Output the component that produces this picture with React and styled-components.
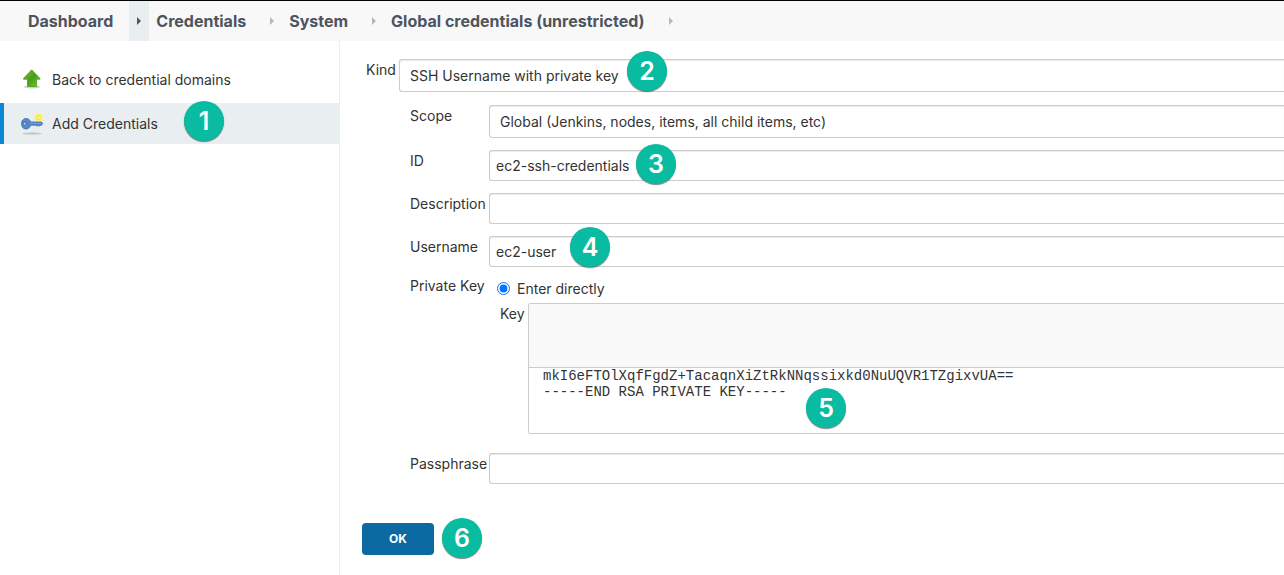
import React from "react";
import styled, { createGlobalStyle } from "styled-components";

const GlobalStyle = createGlobalStyle`
  *, *::before, *::after { box-sizing: border-box; }
  body {
    margin: 0;
    background: #fff;
    color: #333;
    font-family: Inter, "Liberation Sans", sans-serif;
    font-size: 14px;
    line-height: 22px;
  }
  #root { min-height: 100vh; display: flex; flex-direction: column; }
`;

const Breadcrumbs = styled.nav`
  display: flex;
  align-items: stretch;
  height: 41px;
  padding-left: 28px;
  border-top: 1px solid #000;
  background: #f8f8f8;
`;

const Crumb = styled.a`
  display: flex;
  align-items: center;
  color: #4d545d;
  font-size: 16px;
  font-weight: 700;
  text-decoration: none;
  white-space: nowrap;
`;

const CrumbArrow = styled.span`
  display: flex;
  align-items: center;
  justify-content: center;
  width: 20px;
  margin: 0 7px 0 16px;
  color: ${(p) => (p.$active ? "#4d545d" : "#b5b8bb")};
  background: ${(p) => (p.$active ? "#e9eef1" : "transparent")};
`;

const Page = styled.div`
  display: flex;
  flex: 1;
`;

const Sidebar = styled.aside`
  display: flex;
  flex-direction: column;
  flex: 0 0 340px;
  gap: 3px;
  padding-top: 18px;
  border-right: 1px solid #eee;
`;

const Task = styled.a`
  position: relative;
  display: flex;
  align-items: center;
  gap: 8px;
  height: 41px;
  padding-left: 16px;
  border-left: 4px solid ${(p) => (p.$active ? "#0b86d3" : "transparent")};
  background: ${(p) => (p.$active ? "#e9eef1" : "transparent")};
  color: #333;
  text-decoration: none;
`;

const Main = styled.main`
  flex: 1;
  min-width: 0;
  padding: 18px 0 16px 22px;
`;

const Form = styled.form`
  display: flex;
  flex-direction: column;
`;

const Row = styled.div`
  display: flex;
  align-items: flex-start;
`;

const KindRow = styled(Row)`
  padding-left: 4px;
`;

const Fields = styled.div`
  display: flex;
  flex-direction: column;
  gap: 12px;
  padding: 13px 0 0 48px;
`;

const Label = styled.label`
  flex: 0 0 ${(p) => p.$width}px;
  white-space: nowrap;
`;

const GroupLabel = styled.span`
  flex: 0 0 79px;
  white-space: nowrap;
`;

const Control = styled.div`
  position: relative;
  flex: 1;
  min-width: 0;
`;

const Select = styled.select`
  display: block;
  width: 100%;
  height: 33px;
  padding: 0 10px;
  border: 1px solid #ccc;
  border-right: 0;
  border-radius: 3px 0 0 3px;
  box-shadow: inset 0 1px 1px rgba(0, 0, 0, 0.08);
  background: #fff;
  color: #333;
  font: inherit;
  appearance: none;
`;

const TextInput = styled.input`
  display: block;
  width: 100%;
  height: 31px;
  padding: 0 6px;
  border: 1px solid #ccc;
  border-right: 0;
  border-radius: 3px 0 0 3px;
  box-shadow: inset 0 1px 1px rgba(0, 0, 0, 0.08);
  background: #fff;
  color: #333;
  font: inherit;
`;

const KeyGroup = styled(Row)`
  margin-top: -4px;
`;

const RadioLine = styled.label`
  display: flex;
  align-items: center;
  gap: 7px;
  height: 28px;
  padding-left: 8px;
`;

const Radio = styled.input`
  width: 13px;
  height: 13px;
  margin: 0 0 2px;
  accent-color: #0075ff;
`;

const KeyRow = styled(Row)`
  padding: 0 0 7px 11px;
`;

const KeyBox = styled.div`
  border: 1px solid #ccc;
  border-right: 0;
  border-radius: 3px 0 0 3px;
  overflow: hidden;
`;

const KeyCover = styled.div`
  height: 64px;
  border-bottom: 1px solid #ccc;
  background: #f9f9f9;
`;

const KeyText = styled.textarea`
  display: block;
  width: 100%;
  height: 65px;
  padding: 0 14px;
  border: 0;
  resize: none;
  background: #fff;
  color: #333;
  font: 14px/16px "Liberation Mono", monospace;
`;

const Actions = styled.div`
  display: flex;
  align-items: flex-end;
  gap: 8px;
  padding-top: 34px;
`;

const SubmitButton = styled.button`
  width: 72px;
  height: 32px;
  margin-bottom: 3px;
  border: 0;
  border-radius: 4px;
  background: #0b6aa2;
  color: #fff;
  font: 700 12px/16px Inter, "Liberation Sans", sans-serif;
`;

const Badge = styled.span`
  display: flex;
  align-items: center;
  justify-content: center;
  width: 40px;
  height: 40px;
  border-radius: 50%;
  background: #09bba0;
  box-shadow: 0 1px 1px rgba(0, 0, 0, 0.5);
  color: #fff;
  font-size: 25px;
  font-weight: 600;
`;

const PinnedBadge = styled(Badge)`
  position: absolute;
  left: ${(p) => p.$left}px;
  top: ${(p) => p.$top}px;
`;

const ArrowGlyph = () => (
  <svg width="4" height="8" viewBox="0 0 4 8" aria-hidden="true">
    <path d="M0 0 4 4 0 8Z" fill="currentColor" />
  </svg>
);

const UpIcon = () => (
  <svg width="24" height="24" viewBox="0 0 24 24" aria-hidden="true">
    <defs>
      <linearGradient id="up" x1="0" y1="0" x2="1" y2="1">
        <stop offset="0" stopColor="#7cc23c" />
        <stop offset="0.5" stopColor="#4a9c1c" />
        <stop offset="1" stopColor="#6fd81c" />
      </linearGradient>
    </defs>
    <ellipse cx="12" cy="18.800" rx="8.500" ry="1.600" fill="#000" opacity=".18" />
    <path
      d="M11.700 1.800 20 10.500V11.200H16.500V18.500H7.500V11.200H3.500V10.500Z"
      fill="url(#up)"
      stroke="#4f9a22"
      strokeWidth=".8"
      strokeLinejoin="round"
    />
  </svg>
);

const KeyIcon = () => (
  <svg width="24" height="24" viewBox="0 0 24 24" aria-hidden="true">
    <ellipse cx="12" cy="21.500" rx="10" ry="1.200" fill="#000" opacity=".16" />
    <circle cx="18.500" cy="5.500" r="4" fill="#fff36a" />
    <circle cx="18.500" cy="5.500" r="1.800" fill="#fff9b8" stroke="#f6dc1e" />
    <path
      d="M6 6.500c2.500 0 4 1.500 4.600 3.500H21.500l1.200 1.600-1.200 1.600h-1l-.8 1-1.200-1-1.200 1-1.200-1H10.600C10 15.300 8.500 17 6 17 3.200 17 1.500 14.600 1.500 11.700S3.200 6.500 6 6.500Z"
      fill="#5587cb"
      stroke="#3e6db0"
      strokeWidth=".8"
    />
    <path d="M10 11.300H21" stroke="#86abdc" strokeWidth=".8" />
    <ellipse cx="4.800" cy="11.700" rx="1.100" ry="1.700" fill="#e9eef1" stroke="#33619f" strokeWidth=".8" />
  </svg>
);

const crumbs = ["Dashboard", "Credentials", "System", "Global credentials (unrestricted)"];

const privateKey =
  "mkI6eFTOlXqfFgdZ+TacaqnXiZtRkNNqssixkd0NuUQVR1TZgixvUA==\n-----END RSA PRIVATE KEY-----";

export default function App() {
  return (
    <>
      <GlobalStyle />
      <Breadcrumbs aria-label="Breadcrumb">
        {crumbs.map((name, i) => (
          <React.Fragment key={name}>
            <Crumb href="#">{name}</Crumb>
            <CrumbArrow $active={i === 0}>
              <ArrowGlyph />
            </CrumbArrow>
          </React.Fragment>
        ))}
      </Breadcrumbs>
      <Page>
        <Sidebar>
          <Task href="#">
            <UpIcon />
            Back to credential domains
          </Task>
          <Task href="#" $active>
            <KeyIcon />
            Add Credentials
            <PinnedBadge $left={180} $top={-2}>1</PinnedBadge>
          </Task>
        </Sidebar>
        <Main>
          <Form onSubmit={(e) => e.preventDefault()}>
            <KindRow>
              <Label htmlFor="kind" $width={33}>Kind</Label>
              <Control>
                <Select id="kind">
                  <option>SSH Username with private key</option>
                </Select>
                <PinnedBadge $left={228} $top={-8}>2</PinnedBadge>
              </Control>
            </KindRow>
            <Fields>
              <Row>
                <Label htmlFor="scope" $width={79}>Scope</Label>
                <Control>
                  <Select id="scope">
                    <option>Global (Jenkins, nodes, items, all child items, etc)</option>
                  </Select>
                </Control>
              </Row>
              <Row>
                <Label htmlFor="cred-id" $width={79}>ID</Label>
                <Control>
                  <TextInput id="cred-id" defaultValue="ec2-ssh-credentials" />
                  <PinnedBadge $left={147} $top={-6}>3</PinnedBadge>
                </Control>
              </Row>
              <Row>
                <Label htmlFor="description" $width={79}>Description</Label>
                <Control>
                  <TextInput id="description" />
                </Control>
              </Row>
              <Row>
                <Label htmlFor="username" $width={79}>Username</Label>
                <Control>
                  <TextInput id="username" defaultValue="ec2-user" />
                  <PinnedBadge $left={81} $top={-9}>4</PinnedBadge>
                </Control>
              </Row>
              <KeyGroup role="group" aria-labelledby="private-key">
                <GroupLabel id="private-key">Private Key</GroupLabel>
                <Control>
                  <RadioLine>
                    <Radio type="radio" name="source" defaultChecked />
                    Enter directly
                  </RadioLine>
                  <KeyRow>
                    <Label htmlFor="key" $width={28}>Key</Label>
                    <Control>
                      <KeyBox>
                        <KeyCover />
                        <KeyText id="key" spellCheck={false} defaultValue={privateKey} />
                      </KeyBox>
                      <PinnedBadge $left={278} $top={85}>5</PinnedBadge>
                    </Control>
                  </KeyRow>
                </Control>
              </KeyGroup>
              <Row>
                <Label htmlFor="passphrase" $width={79}>Passphrase</Label>
                <Control>
                  <TextInput id="passphrase" type="password" />
                </Control>
              </Row>
            </Fields>
            <Actions>
              <SubmitButton type="submit">OK</SubmitButton>
              <Badge>6</Badge>
            </Actions>
          </Form>
        </Main>
      </Page>
    </>
  );
}
